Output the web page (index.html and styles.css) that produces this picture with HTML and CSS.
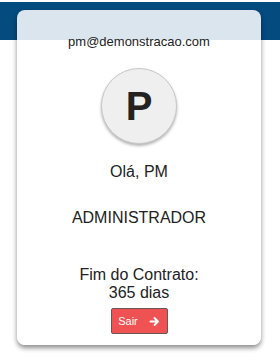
FILE: index.html
```html
<!DOCTYPE html>
<html>
<head>
<meta charset="utf-8">
<link rel="stylesheet" href="styles.css">
</head>
<body>
<div class="band"></div>
<div class="card">
  <div class="email">pm@demonstracao.com</div>
  <div class="avatar">P</div>
  <div class="hello">Olá, PM</div>
  <div class="role">ADMINISTRADOR</div>
  <div class="contract">Fim do Contrato:<br>365 dias</div>
  <button class="logout">Sair
    <svg width="11" height="11" viewBox="0 0 12 12"><path d="M1.5 6h8M6 2.2L9.8 6 6 9.8" fill="none" stroke="#fff" stroke-width="2" stroke-linecap="round" stroke-linejoin="round"/></svg>
  </button>
</div>
</body>
</html>
```
FILE: styles.css
```css
html, body { margin: 0; padding: 0; background: #fff; }
body { font-family: "Liberation Sans", Arial, sans-serif; color: #222; position: relative; width: 280px; height: 364px; overflow: hidden; }
.band { position: absolute; left: 0; top: 2px; width: 280px; height: 38px; background: #044b80; }
.card {
  position: relative;
  margin: 10px 0 0 17px;
  width: 244px;
  height: 335px;
  box-sizing: border-box;
  background: rgba(255,255,255,0.86);
  border-radius: 8px;
  box-shadow: 0 3px 5px rgba(0,0,0,0.45);
  display: flex;
  flex-direction: column;
  align-items: center;
  padding-top: 24px;
}
.email { font-size: 13px; line-height: 16px; color: #222; }
.avatar {
  margin-top: 18px;
  width: 74px; height: 74px;
  border-radius: 50%;
  background: #efefef;
  border: 1px solid #c8c8c8;
  box-shadow: 0 2px 3px rgba(0,0,0,0.3);
  display: flex; align-items: center; justify-content: center;
  font-size: 40px; font-weight: bold; color: #222;
}
.hello { margin-top: 19px; font-size: 16px; line-height: 18px; }
.role { margin-top: 28px; font-size: 16px; line-height: 18px; }
.contract { margin-top: 39px; font-size: 16px; line-height: 18px; text-align: center; }
.logout {
  margin-top: 6px;
  width: 57px; height: 26px;
  background: #ef5252;
  border: 1px solid #6b5555;
  border-radius: 2px;
  color: #fff;
  font-family: "Liberation Sans", Arial, sans-serif;
  font-size: 11px;
  display: flex; align-items: center; justify-content: center; gap: 11px;
  padding: 0;
}
.logout svg { display: block; }
```
